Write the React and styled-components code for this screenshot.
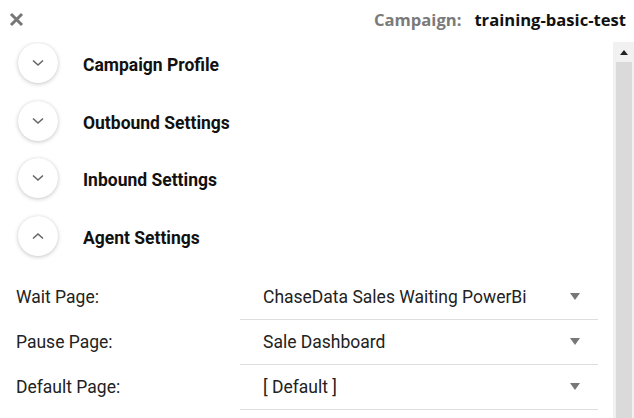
import React from "react";
import styled, { createGlobalStyle } from "styled-components";

const Global = createGlobalStyle`
  html, body { margin: 0; padding: 0; background: #fff; }
  body { font-family: Roboto, "Noto Sans", Arial, sans-serif; }
`;

const Page = styled.div`
  width: 634px;
  height: 418px;
  display: flex;
  flex-direction: column;
  overflow: hidden;
  background: #fff;
`;

const Header = styled.header`
  height: 42px;
  flex: none;
  display: flex;
  align-items: center;
  justify-content: space-between;
  padding: 0 8px 4px 9px;
  box-sizing: border-box;
`;

const CloseButton = styled.button`
  border: 0;
  background: none;
  padding: 0;
  width: 15px;
  height: 15px;
  display: flex;
  cursor: pointer;
`;

const CampaignInfo = styled.div`
  display: flex;
  align-items: baseline;
  gap: 13px;
  font-family: "Open Sans", "Noto Sans", sans-serif;
  font-weight: 700;
  font-size: 16.6px;
`;

const InfoLabel = styled.span`
  color: #7a7a7a;
`;

const InfoValue = styled.span`
  color: #111;
`;

const Body = styled.div`
  flex: 1;
  min-height: 0;
  display: flex;
`;

const Content = styled.div`
  flex: 1;
  min-width: 0;
  overflow: hidden;
  padding: 1px 15px 0 0;
`;

const SectionList = styled.div`
  display: flex;
  flex-direction: column;
  gap: 17.6px;
  padding-left: 18px;
`;

const SectionRow = styled.div`
  display: flex;
  align-items: center;
  gap: 25px;
  height: 40px;
`;

const ToggleCircle = styled.button`
  width: 40px;
  height: 40px;
  border-radius: 50%;
  border: 0;
  background: #fff;
  box-shadow: 0 1px 4px rgba(0, 0, 0, 0.22), 0 0 1px rgba(0, 0, 0, 0.08);
  display: flex;
  align-items: center;
  justify-content: center;
  padding: 0;
  flex: none;
`;

const SectionTitle = styled.span`
  font-size: 17.5px;
  font-weight: 700;
  color: #111;
  padding-top: 4px;
`;

const Form = styled.div`
  margin-top: 19px;
  display: flex;
  flex-direction: column;
`;

const FieldRow = styled.div`
  display: grid;
  grid-template-columns: 240px 1fr;
  align-items: stretch;
  height: 45px;
`;

const FieldLabel = styled.label`
  padding-left: 16px;
  display: flex;
  align-items: center;
  font-size: 17.5px;
  color: #222;
  padding-bottom: 1px;
`;

const Select = styled.div`
  display: flex;
  align-items: center;
  justify-content: space-between;
  border-bottom: 1px solid #dedede;
  padding: 0 18px 0 23px;
  font-size: 17.5px;
  color: #222;
`;

const Caret = styled.span`
  width: 0;
  height: 0;
  border-left: 5px solid transparent;
  border-right: 5px solid transparent;
  border-top: 7px solid #777;
`;

const ScrollRail = styled.div`
  width: 21px;
  flex: none;
  background: #f1f1f1;
  display: flex;
  flex-direction: column;
  align-items: center;
`;

const ScrollArrow = styled.div`
  height: 20px;
  flex: none;
  display: flex;
  align-items: center;
  justify-content: center;
  &::before {
    content: "";
    width: 0;
    height: 0;
    border-left: 4px solid transparent;
    border-right: 4px solid transparent;
    border-bottom: 5px solid #222;
    margin-top: 1px;
  }
`;

const ScrollThumb = styled.div`
  width: 16px;
  flex: 1;
  background: #dadada;
`;

const Chevron = ({ up }) => (
  <svg width="12" height="8" viewBox="0 0 12 8">
    <path
      d={up ? "M1 6.5 L6 2 L11 6.5" : "M1 1.5 L6 6 L11 1.5"}
      fill="none"
      stroke="#666"
      strokeWidth="1.6"
    />
  </svg>
);

const sections = [
  { title: "Campaign Profile", open: false },
  { title: "Outbound Settings", open: false },
  { title: "Inbound Settings", open: false },
  { title: "Agent Settings", open: true },
];

const fields = [
  { label: "Wait Page:", value: "ChaseData Sales Waiting PowerBi" },
  { label: "Pause Page:", value: "Sale Dashboard" },
  { label: "Default Page:", value: "[ Default ]" },
];

export default function App() {
  return (
    <>
      <Global />
      <Page>
        <Header>
          <CloseButton aria-label="Close">
            <svg width="15" height="15" viewBox="0 0 15 15">
              <path d="M2 2 L13 13 M13 2 L2 13" stroke="#777" strokeWidth="3" />
            </svg>
          </CloseButton>
          <CampaignInfo>
            <InfoLabel>Campaign:</InfoLabel>
            <InfoValue>training-basic-test</InfoValue>
          </CampaignInfo>
        </Header>
        <Body>
          <Content>
            <SectionList>
              {sections.map((s) => (
                <SectionRow key={s.title}>
                  <ToggleCircle>
                    <Chevron up={s.open} />
                  </ToggleCircle>
                  <SectionTitle>{s.title}</SectionTitle>
                </SectionRow>
              ))}
            </SectionList>
            <Form>
              {fields.map((f) => (
                <FieldRow key={f.label}>
                  <FieldLabel>{f.label}</FieldLabel>
                  <Select>
                    <span>{f.value}</span>
                    <Caret />
                  </Select>
                </FieldRow>
              ))}
            </Form>
          </Content>
          <ScrollRail>
            <ScrollArrow />
            <ScrollThumb />
          </ScrollRail>
        </Body>
      </Page>
    </>
  );
}
